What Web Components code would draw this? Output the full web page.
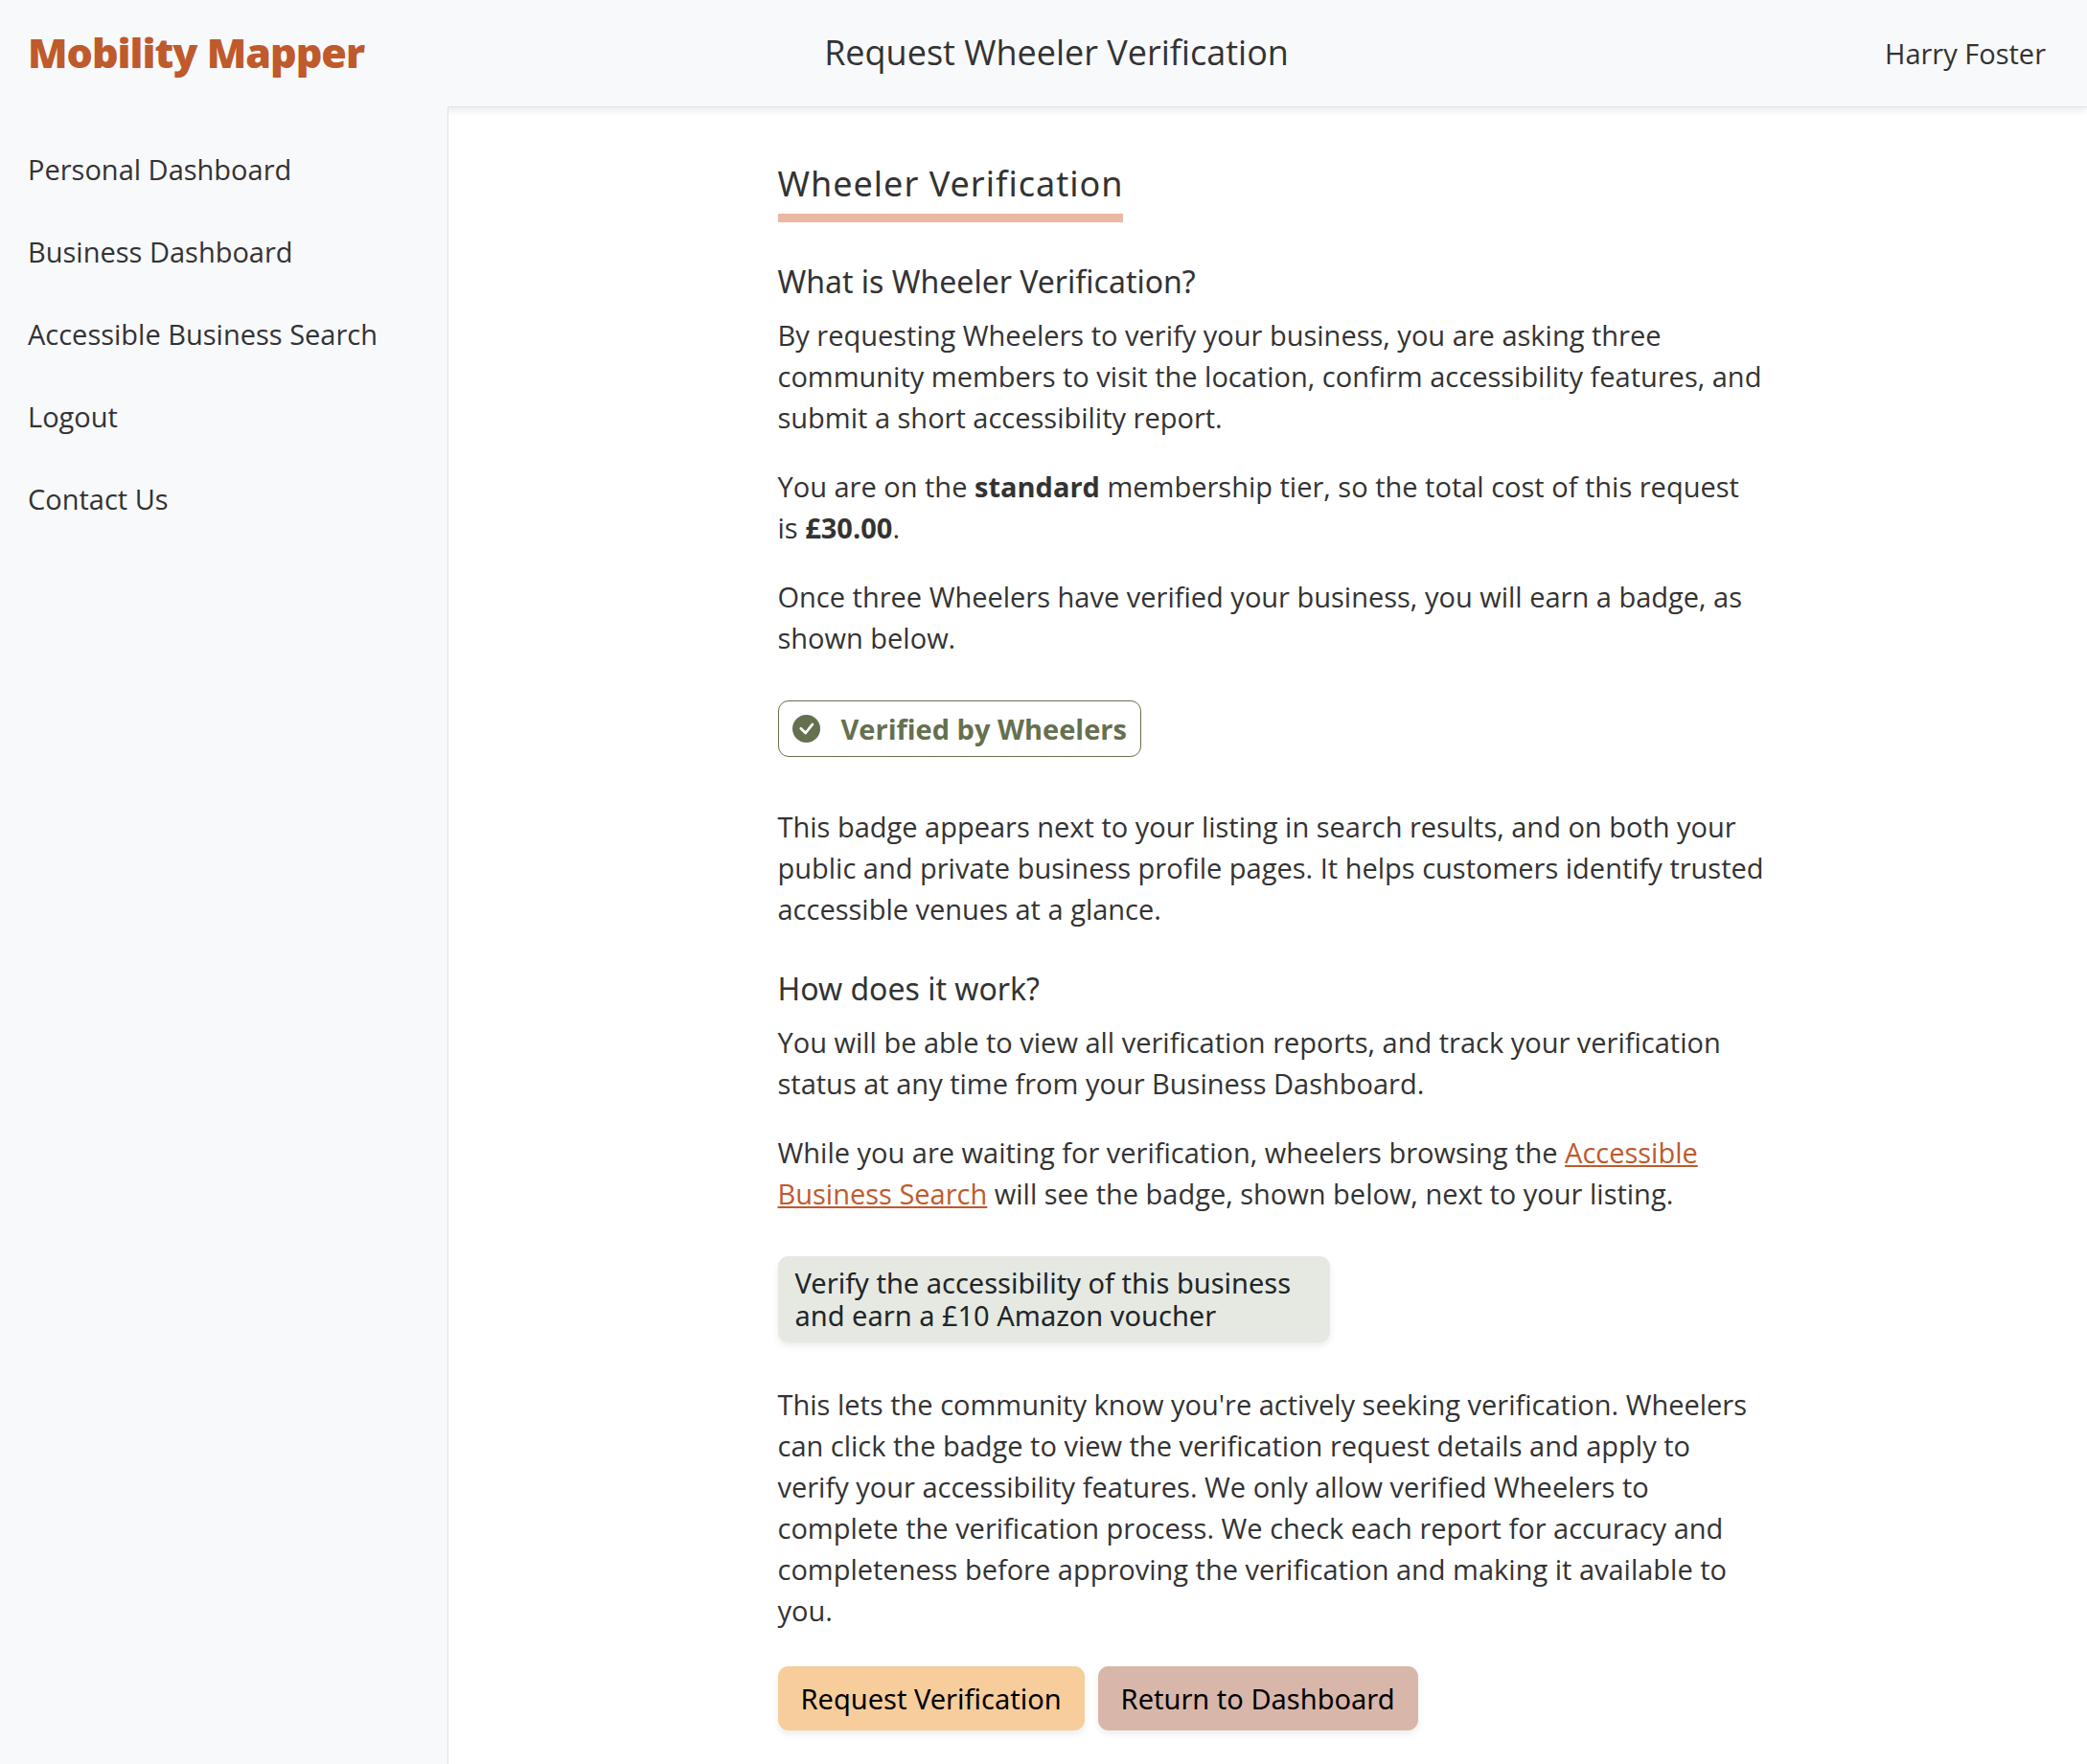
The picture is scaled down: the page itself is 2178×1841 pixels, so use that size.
<!DOCTYPE html>
<html lang="en">
<head>
<meta charset="utf-8">
<meta name="viewport" content="width=device-width, initial-scale=1">
<title>Request Wheeler Verification</title>
<style>
  :root {
    --surface: #f8f9fb;
    --line: #dee2e6;
    --ink: #333333;
    --rust: #bf5a2c;
    --blush: #eab8a4;
    --moss: #65704f;
    --shadow: 0 4px 7px rgba(0, 0, 0, 0.075);
    --display: "Noto Sans", "Open Sans", sans-serif;
  }
  html, body { margin: 0; min-height: 100%; }
  body {
    font-family: "Open Sans", "Noto Sans", sans-serif;
    font-size: 29px;
    line-height: 43px;
    color: var(--ink);
    background: #ffffff;
  }
  strong { font-weight: 700; }
  a { color: var(--rust); }
</style>
</head>
<body>
<mm-app>
  <mm-header slot="header" brand="Mobility Mapper" heading="Request Wheeler Verification" user="Harry Foster"></mm-header>
  <mm-sidebar slot="sidebar">
    <mm-nav-item href="#personal">Personal Dashboard</mm-nav-item>
    <mm-nav-item href="#business">Business Dashboard</mm-nav-item>
    <mm-nav-item href="#search">Accessible Business Search</mm-nav-item>
    <mm-nav-item href="#logout">Logout</mm-nav-item>
    <mm-nav-item href="#contact">Contact Us</mm-nav-item>
  </mm-sidebar>
  <mm-article heading="Wheeler Verification">
    <mm-section heading="What is Wheeler Verification?">
      <mm-text>By requesting Wheelers to verify your business, you are asking three community members to visit the location, confirm accessibility features, and submit a short accessibility report.</mm-text>
      <mm-text>You are on the <strong>standard</strong> membership tier, so the total cost of this request is <strong>£30.00</strong>.</mm-text>
      <mm-text>Once three Wheelers have verified your business, you will earn a badge, as shown below.</mm-text>
      <mm-verified-badge>Verified by Wheelers</mm-verified-badge>
      <mm-text>This badge appears next to your listing in search results, and on both your public and private business profile pages. It helps customers identify trusted accessible venues at a glance.</mm-text>
    </mm-section>
    <mm-section heading="How does it work?">
      <mm-text>You will be able to view all verification reports, and track your verification status at any time from your Business Dashboard.</mm-text>
      <mm-text>While you are waiting for verification, wheelers browsing the <a href="#search">Accessible Business Search</a> will see the badge, shown below, next to your listing.</mm-text>
      <mm-offer-badge>Verify the accessibility of this business and earn a £10 Amazon voucher</mm-offer-badge>
      <mm-text>This lets the community know you're actively seeking verification. Wheelers can click the badge to view the verification request details and apply to verify your accessibility features. We only allow verified Wheelers to complete the verification process. We check each report for accuracy and completeness before approving the verification and making it available to you.</mm-text>
    </mm-section>
    <mm-button slot="actions" tone="primary">Request Verification</mm-button>
    <mm-button slot="actions" tone="secondary">Return to Dashboard</mm-button>
  </mm-article>
</mm-app>

<script>
  const define = (name, render) => {
    customElements.define(name, class extends HTMLElement {
      constructor() {
        super();
        this.attachShadow({ mode: "open" });
      }
      connectedCallback() {
        this.shadowRoot.innerHTML = render(this);
      }
    });
  };

  define("mm-app", () => `
    <style>
      :host { display: flex; flex-direction: column; min-height: 100vh; }
      .body { display: flex; flex: 1; }
      ::slotted(mm-sidebar) { flex: none; }
      main { flex: 1; min-width: 0; }
    </style>
    <slot name="header"></slot>
    <div class="body">
      <slot name="sidebar"></slot>
      <main><slot></slot></main>
    </div>`);

  define("mm-header", (el) => `
    <style>
      :host {
        display: block;
        background: var(--surface);
        border-bottom: 1px solid var(--line);
        box-shadow: var(--shadow);
      }
      header {
        display: flex;
        align-items: center;
        justify-content: space-between;
        height: 111px;
        padding: 0 43px 0 29px;
      }
      .brand, h1 { padding-bottom: 2px; }
      .brand { font-size: 43px; font-weight: 800; letter-spacing: -1px; color: var(--rust); text-decoration: none; }
      h1 { margin: 0; font-size: 36px; font-weight: 400; }
      .user { min-width: 310px; text-align: right; }
    </style>
    <header>
      <a class="brand" href="#home">${el.getAttribute("brand")}</a>
      <h1>${el.getAttribute("heading")}</h1>
      <span class="user">${el.getAttribute("user")}</span>
    </header>`);

  define("mm-sidebar", () => `
    <style>
      :host {
        display: block;
        box-sizing: border-box;
        width: 468px;
        margin-top: -1px;
        position: relative;
        z-index: 1;
        background: var(--surface);
        border-right: 1px solid var(--line);
      }
      nav { display: flex; flex-direction: column; gap: 43px; padding: 44px 29px; }
    </style>
    <nav aria-label="Main"><slot></slot></nav>`);

  define("mm-nav-item", (el) => `
    <style>
      :host { display: block; }
      a { display: block; color: inherit; text-decoration: none; }
    </style>
    <a href="${el.getAttribute("href")}"><slot></slot></a>`);

  define("mm-article", (el) => `
    <style>
      :host { display: block; max-width: 1031px; margin: 0 auto; padding: 58px 0 36px 8px; }
      h2 {
        width: fit-content;
        margin: 0 0 43px;
        padding-bottom: 10px;
        border-bottom: 9px solid var(--blush);
        font-family: var(--display);
        font-size: 36px;
        font-weight: 400;
        letter-spacing: 1px;
        line-height: 43px;
      }
      .sections { display: flex; flex-direction: column; gap: 43px; }
      .actions { display: flex; gap: 14px; margin-top: 37px; }
    </style>
    <h2>${el.getAttribute("heading")}</h2>
    <div class="sections"><slot></slot></div>
    <div class="actions"><slot name="actions"></slot></div>`);

  define("mm-section", (el) => `
    <style>
      :host { display: block; }
      h3 { margin: 0 0 15px; font-family: var(--display); font-size: 32px; font-weight: 400; line-height: 38px; }
      .flow { display: flex; flex-direction: column; gap: 29px; }
    </style>
    <section>
      <h3>${el.getAttribute("heading")}</h3>
      <div class="flow"><slot></slot></div>
    </section>`);

  define("mm-text", () => `
    <style>
      :host { display: block; }
      p { margin: 0; }
    </style>
    <p><slot></slot></p>`);

  define("mm-verified-badge", () => `
    <style>
      :host {
        display: flex;
        align-items: center;
        align-self: flex-start;
        gap: 22px;
        margin: 15px 0 22px;
        padding: 7px 14px;
        border: 1px solid var(--moss);
        border-radius: 11px;
        color: var(--moss);
        font-weight: 700;
      }
      svg { display: block; width: 29px; height: 29px; }
    </style>
    <svg viewBox="0 0 16 16" aria-hidden="true">
      <path fill="currentColor" d="M16 8A8 8 0 1 1 0 8a8 8 0 0 1 16 0m-3.970-3.030a.75.75 0 0 0-1.080.022L7.477 9.417 5.384 7.323a.75.75 0 0 0-1.060 1.060L6.970 11.030a.75.75 0 0 0 1.079-.020l3.992-4.990a.75.75 0 0 0-.010-1.050z"/>
    </svg>
    <slot></slot>`);

  define("mm-offer-badge", () => `
    <style>
      :host {
        display: block;
        box-sizing: border-box;
        width: 576px;
        max-width: 100%;
        margin: 15px 0 14px;
        padding: 11px 18px;
        border-radius: 11px;
        background: #e6e9e1;
        box-shadow: var(--shadow);
        color: #212529;
        font-family: var(--display);
        font-weight: 400;
        line-height: 34px;
      }
    </style>
    <slot></slot>`);

  define("mm-button", (el) => `
    <style>
      :host { display: block; --fill: #f7cd9c; }
      :host([tone="secondary"]) { --fill: #d8b7aa; }
      button {
        display: block;
        padding: 12px 24px;
        border: 0;
        border-radius: 11px;
        background: var(--fill);
        box-shadow: var(--shadow);
        color: #000000;
        font: inherit;
        font-family: var(--display);
        cursor: pointer;
      }
    </style>
    <button type="button"><slot></slot></button>`);
</script>
</body>
</html>
